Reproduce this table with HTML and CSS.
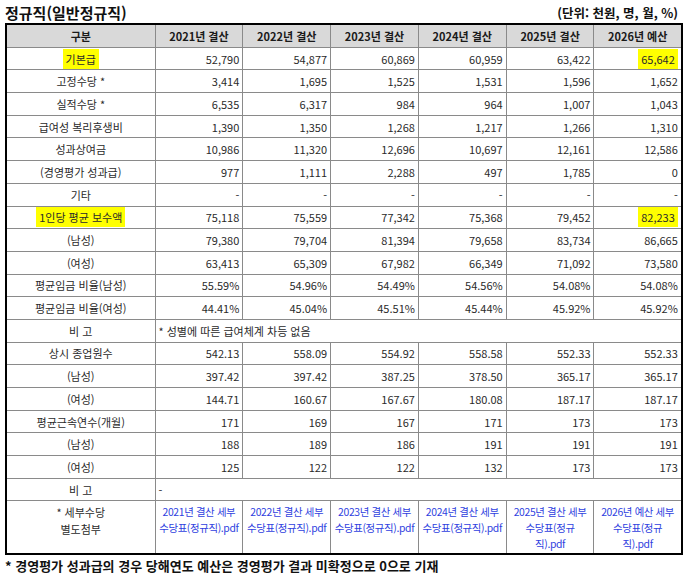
FILE: index.html
```html
<!DOCTYPE html>
<html lang="ko">
<head>
<meta charset="utf-8">
<title>정규직(일반정규직)</title>
<link rel="stylesheet" href="styles.css">
</head>
<body>
<div class="page">
  <div class="titlebar">
    <h2 class="title">정규직(일반정규직)</h2>
    <span class="unit">(단위: 천원, 명, 월, %)</span>
  </div>
  <table class="tbl">
    <colgroup>
      <col class="c-label"><col class="c-year"><col class="c-year"><col class="c-year"><col class="c-year"><col class="c-year"><col class="c-year">
    </colgroup>
    <thead>
      <tr>
        <th>구분</th><th>2021년 결산</th><th>2022년 결산</th><th>2023년 결산</th><th>2024년 결산</th><th>2025년 결산</th><th>2026년 예산</th>
      </tr>
    </thead>
    <tbody>
      <tr><td class="lbl"><span class="hl">기본급</span></td><td>52,790</td><td>54,877</td><td>60,869</td><td>60,959</td><td>63,422</td><td><span class="hl">65,642</span></td></tr>
      <tr><td class="lbl">고정수당 *</td><td>3,414</td><td>1,695</td><td>1,525</td><td>1,531</td><td>1,596</td><td>1,652</td></tr>
      <tr><td class="lbl">실적수당 *</td><td>6,535</td><td>6,317</td><td>984</td><td>964</td><td>1,007</td><td>1,043</td></tr>
      <tr><td class="lbl">급여성 복리후생비</td><td>1,390</td><td>1,350</td><td>1,268</td><td>1,217</td><td>1,266</td><td>1,310</td></tr>
      <tr><td class="lbl">성과상여금</td><td>10,986</td><td>11,320</td><td>12,696</td><td>10,697</td><td>12,161</td><td>12,586</td></tr>
      <tr><td class="lbl">(경영평가 성과급)</td><td>977</td><td>1,111</td><td>2,288</td><td>497</td><td>1,785</td><td>0</td></tr>
      <tr><td class="lbl">기타</td><td>-</td><td>-</td><td>-</td><td>-</td><td>-</td><td>-</td></tr>
      <tr><td class="lbl"><span class="hl">1인당 평균 보수액</span></td><td>75,118</td><td>75,559</td><td>77,342</td><td>75,368</td><td>79,452</td><td><span class="hl">82,233</span></td></tr>
      <tr><td class="lbl">(남성)</td><td>79,380</td><td>79,704</td><td>81,394</td><td>79,658</td><td>83,734</td><td>86,665</td></tr>
      <tr><td class="lbl">(여성)</td><td>63,413</td><td>65,309</td><td>67,982</td><td>66,349</td><td>71,092</td><td>73,580</td></tr>
      <tr><td class="lbl">평균임금 비율(남성)</td><td>55.59%</td><td>54.96%</td><td>54.49%</td><td>54.56%</td><td>54.08%</td><td>54.08%</td></tr>
      <tr><td class="lbl">평균임금 비율(여성)</td><td>44.41%</td><td>45.04%</td><td>45.51%</td><td>45.44%</td><td>45.92%</td><td>45.92%</td></tr>
      <tr><td class="lbl">비 고</td><td class="note" colspan="6">* 성별에 따른 급여체계 차등 없음</td></tr>
      <tr><td class="lbl">상시 종업원수</td><td>542.13</td><td>558.09</td><td>554.92</td><td>558.58</td><td>552.33</td><td>552.33</td></tr>
      <tr><td class="lbl">(남성)</td><td>397.42</td><td>397.42</td><td>387.25</td><td>378.50</td><td>365.17</td><td>365.17</td></tr>
      <tr><td class="lbl">(여성)</td><td>144.71</td><td>160.67</td><td>167.67</td><td>180.08</td><td>187.17</td><td>187.17</td></tr>
      <tr><td class="lbl">평균근속연수(개월)</td><td>171</td><td>169</td><td>167</td><td>171</td><td>173</td><td>173</td></tr>
      <tr><td class="lbl">(남성)</td><td>188</td><td>189</td><td>186</td><td>191</td><td>191</td><td>191</td></tr>
      <tr><td class="lbl">(여성)</td><td>125</td><td>122</td><td>122</td><td>132</td><td>173</td><td>173</td></tr>
      <tr><td class="lbl">비 고</td><td class="note" colspan="6">-</td></tr>
      <tr class="files">
        <td class="lbl">* 세부수당<br>별도첨부</td>
        <td><a href="#">2021년 결산 세부 수당표(정규직).pdf</a></td>
        <td><a href="#">2022년 결산 세부 수당표(정규직).pdf</a></td>
        <td><a href="#">2023년 결산 세부 수당표(정규직).pdf</a></td>
        <td><a href="#">2024년 결산 세부 수당표(정규직).pdf</a></td>
        <td><a href="#">2025년 결산 세부 수당표(정규<br>직).pdf</a></td>
        <td><a href="#">2026년 예산 세부 수당표(정규<br>직).pdf</a></td>
      </tr>
    </tbody>
  </table>
  <p class="footnote">* 경영평가 성과급의 경우 당해연도 예산은 경영평가 결과 미확정으로 0으로 기재</p>
</div>
</body>
</html>
```

FILE: styles.css
```css
html, body {
  margin: 0;
  padding: 0;
  background: #ffffff;
}

body {
  font-family: "Noto Sans CJK KR", "Noto Sans", sans-serif;
  color: #1a1a1a;
}

.page {
  width: 676px;
  padding: 0 4px 0 5px;
}

.titlebar {
  display: flex;
  justify-content: space-between;
  align-items: flex-end;
  height: 23px;
}

.title {
  margin: 0;
  font-size: 15px;
  font-weight: 700;
  line-height: 21px;
  color: #111111;
}

.unit {
  font-size: 12.5px;
  font-weight: 700;
  line-height: 20px;
  color: #111111;
  margin-right: 3px;
}

.tbl {
  width: 676px;
  border-collapse: collapse;
  border: 2px solid #000000;
  table-layout: fixed;
  font-size: 11px;
}

.c-label { width: 149px; }
.c-year { width: 87.8px; }

.tbl th,
.tbl td {
  border: 1px solid #8a8a8a;
  height: 21.7px;
  padding: 0 3px;
  line-height: 14px;
  white-space: nowrap;
}

.tbl th {
  background: #d9d9d9;
  font-weight: 700;
  text-align: center;
  color: #1a1a1a;
}

.tbl td {
  text-align: right;
  color: #2a2a2a;
}

.tbl td.lbl {
  text-align: center;
}

.tbl td.note {
  text-align: left;
}

.hl {
  background: #ffff00;
  padding: 2px 3px;
}

.tbl .files td {
  height: 49px;
  vertical-align: top;
  text-align: center;
  white-space: normal;
  word-break: keep-all;
  padding: 3px 1px 0 1px;
  line-height: 16px;
  font-size: 10.4px;
  letter-spacing: -0.35px;
}

.tbl .files td.lbl {
  font-size: 11px;
  letter-spacing: 0;
  line-height: 17px;
}

.files a {
  color: #2f3fe0;
  text-decoration: none;
}

.footnote {
  margin: 2px 0 0 0;
  font-size: 13px;
  font-weight: 700;
  line-height: 17px;
  color: #111111;
}
```
